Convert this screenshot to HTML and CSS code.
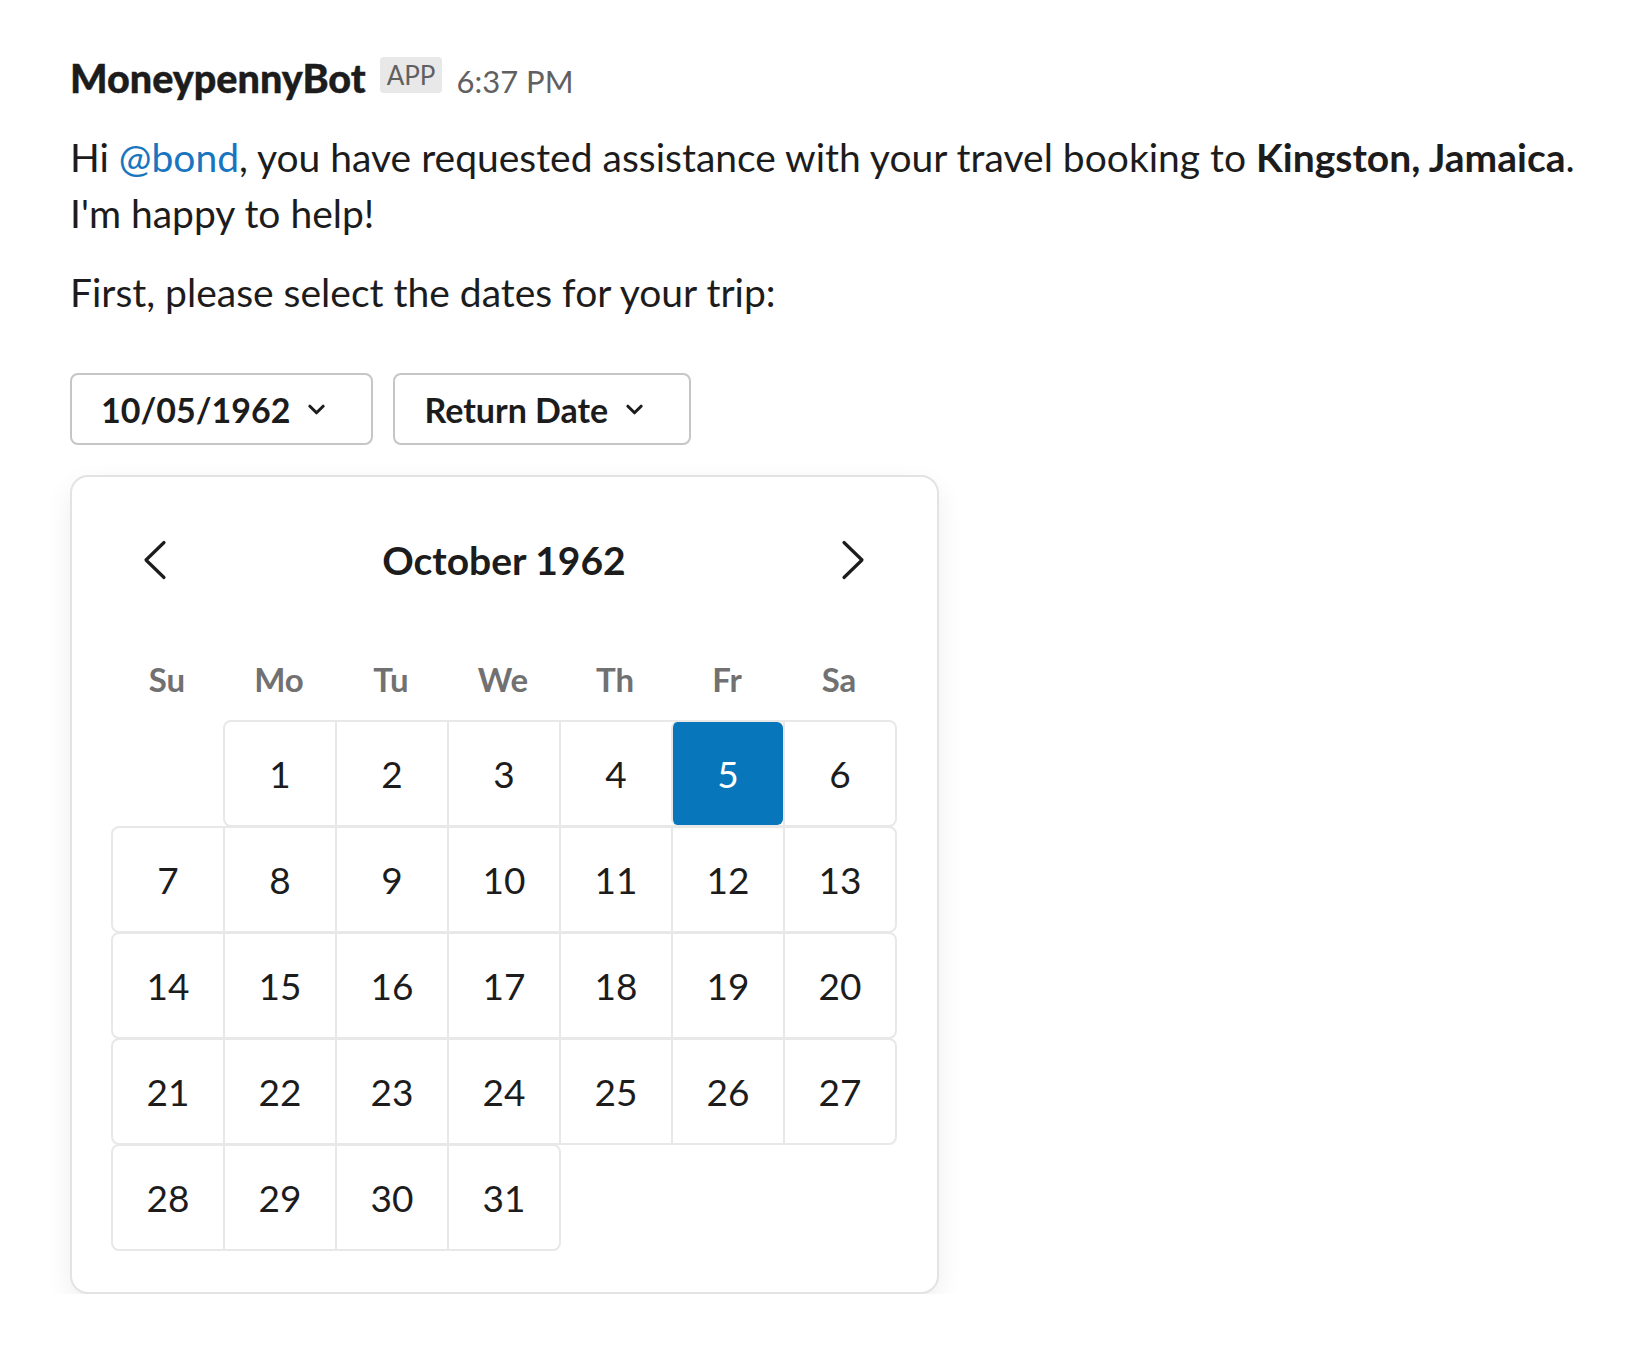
FILE: index.html
```html
<!DOCTYPE html>
<html lang="en">
<head>
<meta charset="utf-8">
<title>MoneypennyBot</title>
<link rel="stylesheet" href="styles.css">
</head>
<body>
<div class="msg">
  <div class="msg-head">
    <span class="name">MoneypennyBot</span>
    <span class="badge">APP</span>
    <span class="time">6:37 PM</span>
  </div>
  <p class="text">Hi <a class="mention">@bond</a>, you have requested assistance with your travel booking to <b>Kingston, Jamaica</b>. I'm happy to help!</p>
  <p class="text">First, please select the dates for your trip:</p>
  <div class="actions">
    <button class="select">10/05/1962<svg class="chev" viewBox="0 0 18 11" width="17" height="11"><polyline points="2,2 9,9 16,2"/></svg></button>
    <button class="select select-2">Return Date<svg class="chev" viewBox="0 0 18 11" width="17" height="11"><polyline points="2,2 9,9 16,2"/></svg></button>
  </div>
  <div class="cal">
    <div class="cal-head">
      <svg class="arrow" viewBox="0 0 24 40" width="24" height="40"><polyline points="21,2.5 3,20 21,37.5"/></svg>
      <span class="cal-title">October 1962</span>
      <svg class="arrow" viewBox="0 0 24 40" width="24" height="40"><polyline points="3,2.5 21,20 3,37.5"/></svg>
    </div>
    <div class="dow">
      <span>Su</span><span>Mo</span><span>Tu</span><span>We</span><span>Th</span><span>Fr</span><span>Sa</span>
    </div>
    <div class="weeks">
      <div class="week week-first">
        <span class="day">1</span><span class="day">2</span><span class="day">3</span><span class="day">4</span><span class="day day-sel">5</span><span class="day">6</span>
      </div>
      <div class="week">
        <span class="day">7</span><span class="day">8</span><span class="day">9</span><span class="day">10</span><span class="day">11</span><span class="day">12</span><span class="day">13</span>
      </div>
      <div class="week">
        <span class="day">14</span><span class="day">15</span><span class="day">16</span><span class="day">17</span><span class="day">18</span><span class="day">19</span><span class="day">20</span>
      </div>
      <div class="week">
        <span class="day">21</span><span class="day">22</span><span class="day">23</span><span class="day">24</span><span class="day">25</span><span class="day">26</span><span class="day">27</span>
      </div>
      <div class="week week-last">
        <span class="day">28</span><span class="day">29</span><span class="day">30</span><span class="day">31</span>
      </div>
    </div>
  </div>
</div>
</body>
</html>
```

FILE: styles.css
```css
* { box-sizing: border-box; }

html, body {
  margin: 0;
  padding: 0;
  background: #ffffff;
}

body {
  font-family: Lato, "Noto Sans", "Liberation Sans", sans-serif;
  color: #1d1c1d;
}

.msg {
  padding: 50px 0 0 70px;
}

.msg-head {
  display: flex;
  align-items: baseline;
  height: 56px;
  line-height: 56px;
}

.name {
  font-size: 39.5px;
  font-weight: 900;
  color: #1d1c1d;
  -webkit-text-stroke: 0.4px #1d1c1d;
}

.badge {
  margin-left: 14px;
  padding: 0 7px;
  height: 36px;
  line-height: 36px;
  font-size: 26px;
  color: #616061;
  background: #e8e8e8;
  border-radius: 4px;
  align-self: center;
  position: relative;
  top: -3px;
}

.time {
  margin-left: 14px;
  font-size: 31px;
  color: #616061;
}

.text {
  margin: 23px 0 0;
  max-width: 1532px;
  font-size: 39px;
  line-height: 56px;
}

.text b { font-weight: 700; }

.mention {
  color: #1a75bf;
  text-decoration: none;
}

.actions {
  display: flex;
  gap: 20px;
  margin-top: 53px;
}

.select {
  display: flex;
  align-items: center;
  gap: 18px;
  height: 72px;
  padding: 0 46px 0 29px;
  font-family: inherit;
  font-size: 34px;
  font-weight: 700;
  color: #1d1c1d;
  background: #ffffff;
  border: 2px solid #c6c6c6;
  border-radius: 8px;
}

.chev polyline {
  fill: none;
  stroke: #1d1c1d;
  stroke-width: 3.2;
  stroke-linecap: round;
  stroke-linejoin: round;
}

.cal {
  width: 869px;
  margin-top: 30px;
  padding: 43px 39px 41px;
  border: 2px solid #e3e3e3;
  border-radius: 18px;
  background: #ffffff;
  box-shadow: 0 10px 28px rgba(0, 0, 0, 0.07);
}

.cal-head {
  display: flex;
  align-items: center;
  justify-content: space-between;
  height: 80px;
  padding: 0 33px 0 32px;
}

.cal-title {
  font-size: 39px;
  font-weight: 700;
}

.arrow polyline {
  fill: none;
  stroke: #1d1c1d;
  stroke-width: 3.2;
  stroke-linecap: round;
  stroke-linejoin: round;
}

.dow {
  display: grid;
  grid-template-columns: repeat(7, 112px);
  margin-top: 57px;
  height: 44px;
  line-height: 44px;
  font-size: 33px;
  font-weight: 700;
  color: #717171;
  text-align: center;
}

.weeks {
  margin-top: 19px;
  width: 786px;
}

.week {
  display: flex;
  height: 107px;
  border: 2px solid #e8e8e8;
  border-radius: 8px;
}

.week + .week { margin-top: -1px; }

.week-first { margin-left: 112px; }
.week-last { width: 450px; }

.day {
  flex: 1;
  display: flex;
  align-items: center;
  justify-content: center;
  font-size: 37px;
  color: #1d1c1d;
}

.day + .day { border-left: 2px solid #e8e8e8; }

.day-sel {
  background: #0776ba;
  color: #ffffff;
  border-radius: 6px;
}
```
